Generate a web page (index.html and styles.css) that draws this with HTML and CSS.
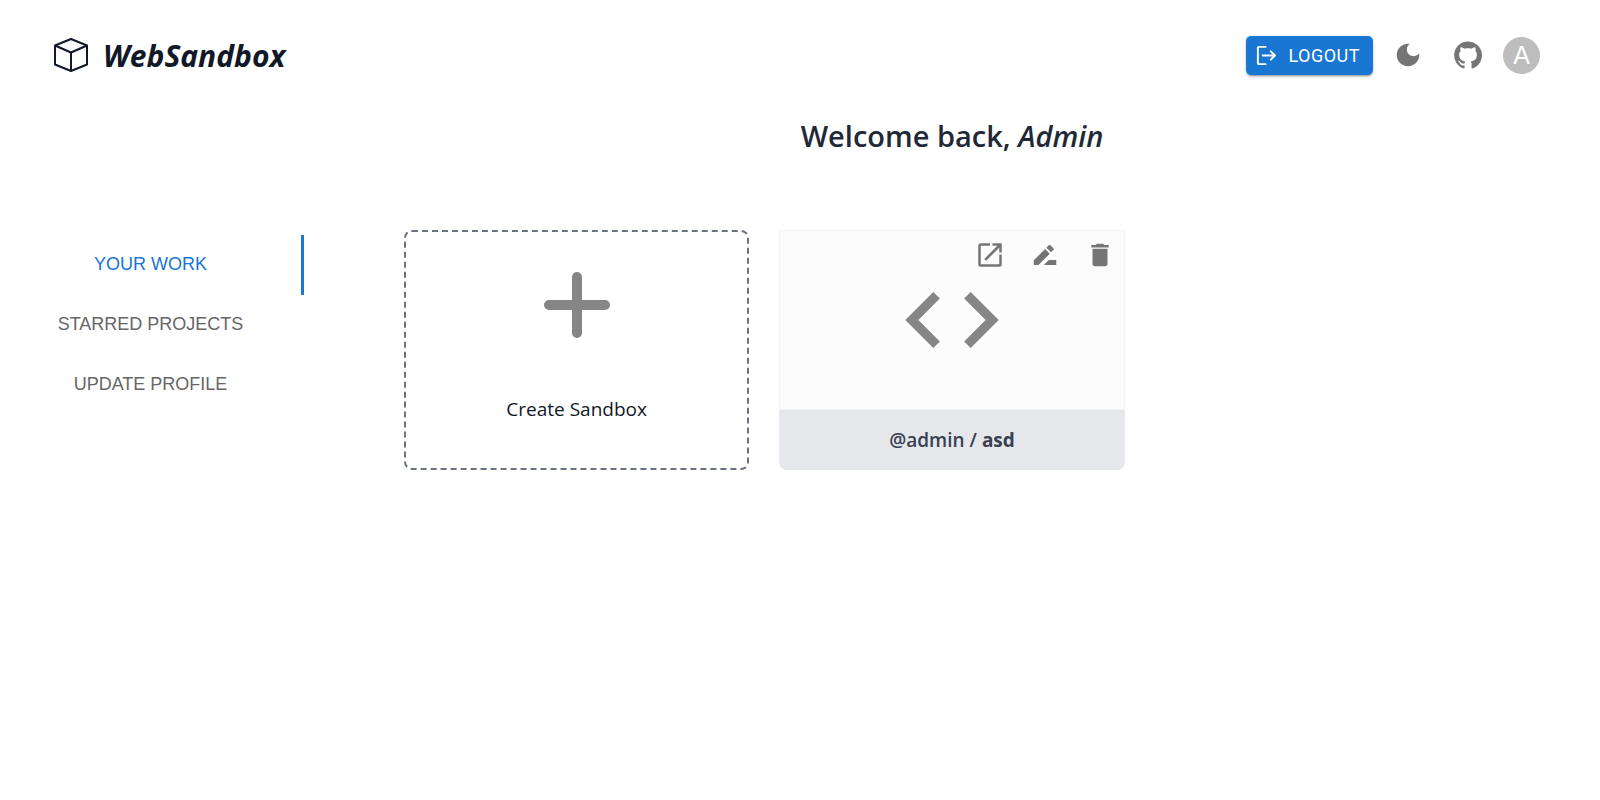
FILE: index.html
```html
<!DOCTYPE html>
<html lang="en">
<head>
<meta charset="utf-8">
<title>WebSandbox</title>
<link rel="stylesheet" href="styles.css">
</head>
<body>
<header class="header">
  <a class="brand" href="#">
    <svg class="brand-icon" viewBox="0 0 36 36" aria-hidden="true"><path d="M18 2 34 8.500V27.500L18 34 2 27.500V8.500ZM2 8.500 18 15.500 34 8.500M18 15.500V34"/></svg>
    <span>WebSandbox</span>
  </a>
  <div class="actions">
    <button class="logout" type="button">
      <svg class="logout-icon" viewBox="0 0 24 24" aria-hidden="true"><path d="M11 3H4a1 1 0 0 0-1 1v16a1 1 0 0 0 1 1h7M8 12h12.500M16.500 7.700l4.300 4.300-4.300 4.300"/></svg>
      LOGOUT
    </button>
    <button class="icon-button" type="button" aria-label="Dark mode">
      <svg class="icon" viewBox="0 0 24 24"><path d="M12 3c-4.970 0-9 4.030-9 9s4.030 9 9 9 9-4.030 9-9c0-.46-.04-.92-.1-1.360-.98 1.370-2.580 2.260-4.400 2.260-2.980 0-5.400-2.420-5.400-5.400 0-1.810.89-3.420 2.260-4.400-.44-.06-.9-.1-1.360-.1z"/></svg>
    </button>
    <a class="icon-button" href="#" aria-label="GitHub">
      <svg class="icon" viewBox="0 0 24 24"><path d="M12 1.270a11 11 0 00-3.480 21.460c.55.09.73-.28.73-.55v-1.840c-3.030.64-3.670-1.460-3.670-1.460-.55-1.290-1.280-1.650-1.280-1.650-.92-.65.1-.65.1-.65 1.100 0 1.730 1.100 1.730 1.100.92 1.650 2.570 1.200 3.210.92a2 2 0 01.64-1.470c-2.470-.27-5.040-1.190-5.040-5.500 0-1.100.46-2.100 1.200-2.840a3.760 3.760 0 010-2.930s.91-.28 3.110 1.100c1.800-.49 3.700-.49 5.500 0 2.100-1.380 3.020-1.100 3.020-1.100a3.760 3.760 0 01.1 2.930c.83.74 1.200 1.740 1.200 2.940 0 4.210-2.570 5.130-5.040 5.400.45.37.82.92.82 2.020v3.030c0 .27.1.64.73.55A11 11 0 0012 1.270"/></svg>
    </a>
    <button class="avatar" type="button" aria-label="Account">A</button>
  </div>
</header>
<div class="layout">
  <nav class="tabs">
    <button class="tab tab-active" type="button">YOUR WORK</button>
    <button class="tab" type="button">STARRED PROJECTS</button>
    <button class="tab" type="button">UPDATE PROFILE</button>
  </nav>
  <main class="main">
    <h1 class="welcome">Welcome back, <em>Admin</em></h1>
    <div class="cards">
      <button class="card create" type="button">
        <svg class="plus" viewBox="0 0 66 66" aria-hidden="true"><path d="M33 5v56M5 33h56"/></svg>
        <span>Create Sandbox</span>
      </button>
      <article class="card project">
        <div class="preview">
          <svg class="code" viewBox="0 0 24 24" aria-hidden="true"><path d="M9.400 16.600 4.800 12l4.600-4.600L8 6l-6 6 6 6zm5.200 0 4.600-4.600-4.600-4.600L16 6l6 6-6 6z"/></svg>
          <div class="tools">
            <a class="tool" href="#" aria-label="Open">
              <svg class="icon" viewBox="0 0 24 24"><path d="M12 2.600H4.600A2 2 0 0 0 2.600 4.600v14.800a2 2 0 0 0 2 2h14.800a2 2 0 0 0 2-2V11.600h-2v7.800H4.600V4.600H12zM14 2.600v2h3.900L7.400 15.100 8.900 16.600 19.400 6.100v3.900h2V2.600z"/></svg>
            </a>
            <button class="tool" type="button" aria-label="Rename">
              <svg class="icon" viewBox="0 0 24 24"><path d="m15 16-4 4h10v-4zm-2.940-8.810L3 16.250V20h3.750l9.060-9.060zM18.710 8.040a1 1 0 0 0 0-1.410l-2.340-2.340a1 1 0 0 0-1.410 0l-1.830 1.830 3.750 3.750z"/></svg>
            </button>
            <button class="tool" type="button" aria-label="Delete">
              <svg class="icon" viewBox="0 0 24 24"><path d="M6 19c0 1.100.9 2 2 2h8c1.100 0 2-.9 2-2V7H6zM19 4h-3.500l-1-1h-5l-1 1H5v2h14z"/></svg>
            </button>
          </div>
        </div>
        <a class="caption" href="#">@admin / <strong>asd</strong></a>
      </article>
    </div>
  </main>
</div>
</body>
</html>
```
FILE: styles.css
```css
* {
  box-sizing: border-box;
}

body {
  margin: 0;
  background: #fff;
  color: #1f2937;
  font-family: "Segoe UI", "Open Sans", "Noto Sans", sans-serif;
}

button {
  margin: 0;
  padding: 0;
  border: 0;
  background: none;
  color: inherit;
  font: inherit;
  cursor: pointer;
}

a {
  color: inherit;
  text-decoration: none;
}

.header {
  display: flex;
  align-items: center;
  justify-content: space-between;
  height: 110px;
  padding: 0 60px 0 53px;
}

.brand {
  display: flex;
  align-items: center;
  gap: 14px;
  color: #111827;
  font-size: 30px;
  font-style: italic;
  font-weight: 700;
}

.brand-icon {
  width: 36px;
  height: 36px;
  fill: none;
  stroke: currentColor;
  stroke-width: 2;
  stroke-linejoin: round;
}

.actions {
  display: flex;
  align-items: center;
}

.logout {
  display: flex;
  align-items: center;
  gap: 10px;
  height: 39px;
  margin-right: 12px;
  padding: 0 13px 0 9px;
  border-radius: 5px;
  background: #1976d2;
  box-shadow: 0 3px 1px -2px rgba(0, 0, 0, .2), 0 2px 2px rgba(0, 0, 0, .14), 0 1px 5px rgba(0, 0, 0, .12);
  color: #fff;
  font-family: Roboto, sans-serif;
  font-size: 18px;
  letter-spacing: .5px;
}

.logout-icon {
  width: 23px;
  height: 23px;
  fill: none;
  stroke: currentColor;
  stroke-width: 2;
  stroke-linecap: round;
  stroke-linejoin: round;
}

.icon-button {
  display: flex;
  align-items: center;
  justify-content: center;
  width: 46px;
  height: 46px;
  margin-right: 14px;
  color: #757575;
}

.icon-button + .icon-button {
  margin-right: 12px;
}

.icon {
  width: 30px;
  height: 30px;
  fill: currentColor;
}

.avatar {
  width: 37px;
  height: 37px;
  border-radius: 50%;
  background: #bdbdbd;
  color: #fff;
  font-family: "Liberation Sans", Arial, sans-serif;
  font-size: 25px;
  line-height: 37px;
}

.layout {
  display: grid;
  grid-template-columns: 19% 1fr;
}

.tabs {
  display: flex;
  flex-direction: column;
  padding-top: 125px;
}

.tab {
  height: 60px;
  padding-bottom: 2px;
  border-right: 3px solid transparent;
  color: #666;
  font-family: "Liberation Sans", Arial, sans-serif;
  font-size: 18px;
}

.tab-active {
  border-right-color: #1976d2;
  color: #1976d2;
}

.main {
  padding: 0 100px;
}

.welcome {
  margin: 0 0 68px;
  font-size: 29px;
  font-weight: 600;
  line-height: 52px;
  text-align: center;
}

.cards {
  display: grid;
  grid-template-columns: repeat(3, 1fr);
  gap: 30px;
}

.card {
  height: 240px;
  border-radius: 8px;
}

.create {
  display: flex;
  flex-direction: column;
  align-items: center;
  gap: 54px;
  padding-top: 40px;
  border: 2px dashed #6b7280;
  color: #111827;
  font-size: 19px;
  line-height: 34px;
}

.plus {
  width: 66px;
  height: 66px;
  fill: none;
  stroke: #868686;
  stroke-width: 10;
  stroke-linecap: round;
}

.project {
  display: flex;
  flex-direction: column;
  overflow: hidden;
  border-top-left-radius: 0;
  border-top-right-radius: 0;
}

.preview {
  position: relative;
  display: flex;
  align-items: center;
  justify-content: center;
  height: 180px;
  border: 1px solid #f3f4f6;
  background: #fcfcfc;
}

.code {
  width: 112px;
  height: 112px;
  fill: #868686;
}

.tools {
  position: absolute;
  top: 1px;
  right: 1px;
  display: flex;
  gap: 9px;
  color: #757575;
}

.tool {
  display: flex;
  align-items: center;
  justify-content: center;
  width: 46px;
  height: 46px;
}

.caption {
  display: flex;
  align-items: center;
  justify-content: center;
  gap: 5px;
  height: 60px;
  background: #e5e7eb;
  color: #374151;
  font-size: 19px;
  font-weight: 600;
}

.caption strong {
  font-weight: 700;
}
```
